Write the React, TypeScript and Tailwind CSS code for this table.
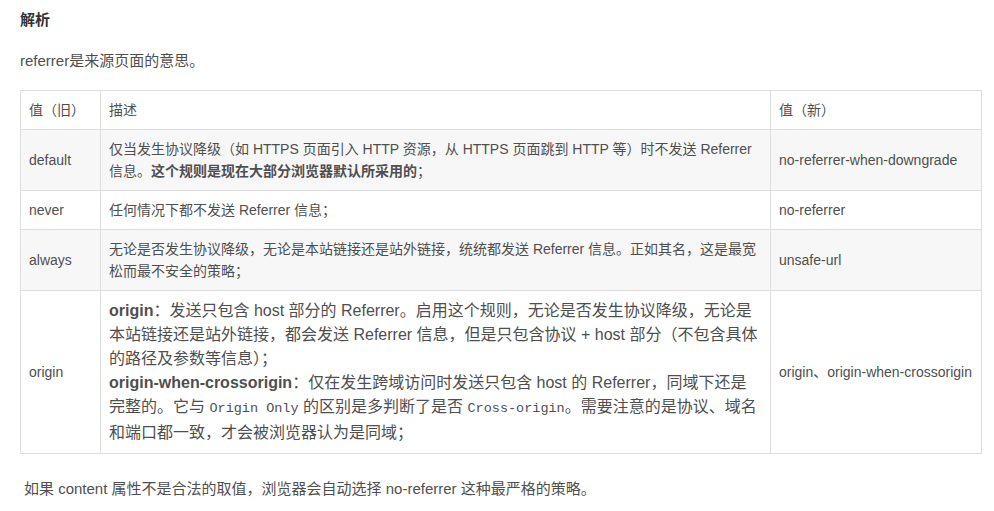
import React from "react";

const font = { fontFamily: '"Liberation Sans", "Noto Sans CJK SC", sans-serif' };

export default function App() {
  const td = "border border-[#dddddd] px-[8px] py-[8px] align-middle text-[14px] leading-[22px]";
  const mono = "font-['Liberation_Mono','Noto_Sans_CJK_SC',monospace] text-[13.5px]";
  return (
    <div className="bg-white min-h-[511px] px-[20px] pt-[8px] text-[#4f4f4f]" style={font}>
      <h4 className="text-[15px] leading-[24px] font-bold text-[#333333]">解析</h4>
      <p className="mt-[17px] text-[15px] leading-[24px]">referrer是来源页面的意思。</p>
      <table className="mt-[17px] w-[961px] table-fixed border-collapse">
        <colgroup>
          <col className="w-[80px]" />
          <col className="w-[670px]" />
          <col className="w-[211px]" />
        </colgroup>
        <tbody>
          <tr className="bg-white">
            <td className={td}>值（旧）</td>
            <td className={td}>描述</td>
            <td className={td}>值（新）</td>
          </tr>
          <tr className="bg-[#f7f7f7]">
            <td className={td}>default</td>
            <td className={td}>
              仅当发生协议降级（如 HTTPS 页面引入 HTTP 资源，从 HTTPS 页面跳到 HTTP 等）时不发送 Referrer
              <br />
              信息。<strong className="font-bold">这个规则是现在大部分浏览器默认所采用的</strong>；
            </td>
            <td className={td}>no-referrer-when-downgrade</td>
          </tr>
          <tr className="bg-white">
            <td className={td}>never</td>
            <td className={td}>任何情况下都不发送 Referrer 信息；</td>
            <td className={td}>no-referrer</td>
          </tr>
          <tr className="bg-[#f7f7f7]">
            <td className={td}>always</td>
            <td className={td}>
              无论是否发生协议降级，无论是本站链接还是站外链接，统统都发送 Referrer 信息。正如其名，这是最宽
              <br />
              松而最不安全的策略；
            </td>
            <td className={td}>unsafe-url</td>
          </tr>
          <tr className="bg-white">
            <td className={td}>origin</td>
            <td className="border border-[#dddddd] px-[8px] py-[8px] align-middle text-[16px] leading-[24px]">
              <strong className="font-bold">origin</strong>：发送只包含 host 部分的 Referrer。启用这个规则，无论是否发生协议降级，无论是
              <br />
              本站链接还是站外链接，都会发送 Referrer 信息，但是只包含协议 + host 部分（不包含具体
              <br />
              的路径及参数等信息）；
              <br />
              <strong className="font-bold">origin-when-crossorigin</strong>：仅在发生跨域访问时发送只包含 host 的 Referrer，同域下还是
              <br />
              完整的。它与 <code className={mono}>Origin Only</code> 的区别是多判断了是否{" "}
              <code className={mono}>Cross-origin</code>。需要注意的是协议、域名
              <br />
              和端口都一致，才会被浏览器认为是同域；
            </td>
            <td className={td}>origin、origin-when-crossorigin</td>
          </tr>
        </tbody>
      </table>
      <p className="mt-[23px] pl-[4px] text-[15px] leading-[24px]">
        如果 content 属性不是合法的取值，浏览器会自动选择 no-referrer 这种最严格的策略。
      </p>
    </div>
  );
}
